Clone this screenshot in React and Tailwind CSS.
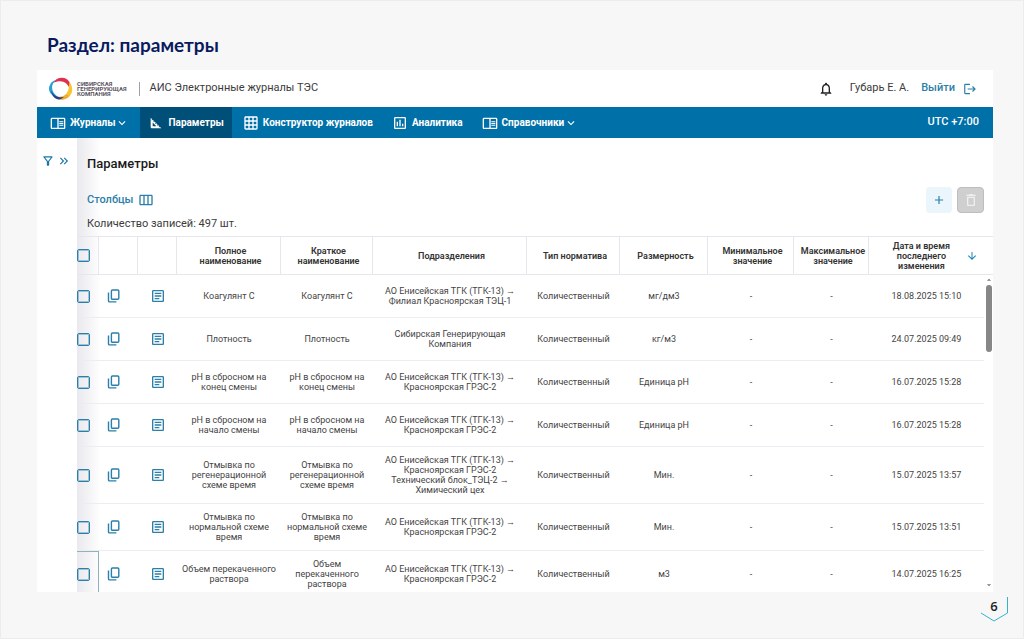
import React from 'react';
import {
  MdAdd,
  MdArrowDownward,
  MdArrowDropDown,
  MdArrowDropUp,
  MdExpandMore,
  MdGridOn,
  MdKeyboardDoubleArrowRight,
  MdLogout,
  MdNotificationsNone,
  MdOutlineArticle,
  MdOutlineAssessment,
  MdOutlineChromeReaderMode,
  MdOutlineDelete,
  MdOutlineFilterAlt,
  MdOutlineViewWeek,
  MdSquareFoot,
} from 'react-icons/md';

const NAV_ITEMS = [
  { label: 'Журналы', icon: MdOutlineChromeReaderMode, menu: true },
  { label: 'Параметры', icon: MdSquareFoot, active: true },
  { label: 'Конструктор журналов', icon: MdGridOn },
  { label: 'Аналитика', icon: MdOutlineAssessment },
  { label: 'Справочники', icon: MdOutlineChromeReaderMode, menu: true },
];

const COLUMNS = [
  { title: ['Полное', 'наименование'], width: 'w-[104px]' },
  { title: ['Краткое', 'наименование'], width: 'w-[92px]' },
  { title: ['Подразделения'], width: '' },
  { title: ['Тип норматива'], width: 'w-[93px]' },
  { title: ['Размерность'], width: 'w-[88px]' },
  { title: ['Минимальное', 'значение'], width: 'w-[86px]' },
  { title: ['Максимальное', 'значение'], width: 'w-[75px]' },
];

const ROWS = [
  {
    name: ['Коагулянт С'],
    short: ['Коагулянт С'],
    units: ['АО Енисейская ТГК (ТГК-13) →', 'Филиал Красноярская ТЭЦ-1'],
    measure: 'мг/дм3',
    date: '18.08.2025 15:10',
  },
  {
    name: ['Плотность'],
    short: ['Плотность'],
    units: ['Сибирская Генерирующая', 'Компания'],
    measure: 'кг/м3',
    date: '24.07.2025 09:49',
  },
  {
    name: ['pH в сбросном на', 'конец смены'],
    short: ['pH в сбросном на', 'конец смены'],
    units: ['АО Енисейская ТГК (ТГК-13) →', 'Красноярская ГРЭС-2'],
    measure: 'Единица pH',
    date: '16.07.2025 15:28',
  },
  {
    name: ['pH в сбросном на', 'начало смены'],
    short: ['pH в сбросном на', 'начало смены'],
    units: ['АО Енисейская ТГК (ТГК-13) →', 'Красноярская ГРЭС-2'],
    measure: 'Единица pH',
    date: '16.07.2025 15:28',
  },
  {
    name: ['Отмывка по', 'регенерационной', 'схеме время'],
    short: ['Отмывка по', 'регенерационной', 'схеме время'],
    units: ['АО Енисейская ТГК (ТГК-13) →', 'Красноярская ГРЭС-2', 'Технический блок_ТЭЦ-2 →', 'Химический цех'],
    measure: 'Мин.',
    date: '15.07.2025 13:57',
  },
  {
    name: ['Отмывка по', 'нормальной схеме', 'время'],
    short: ['Отмывка по', 'нормальной схеме', 'время'],
    units: ['АО Енисейская ТГК (ТГК-13) →', 'Красноярская ГРЭС-2'],
    measure: 'Мин.',
    date: '15.07.2025 13:51',
  },
  {
    name: ['Объем перекаченного', 'раствора'],
    short: ['Объем', 'перекаченного', 'раствора'],
    units: ['АО Енисейская ТГК (ТГК-13) →', 'Красноярская ГРЭС-2'],
    measure: 'м3',
    date: '14.07.2025 16:25',
    focused: true,
  },
];

const Logo = () => (
  <svg className="w-6 h-6" viewBox="0 0 24 24" aria-hidden="true">
    <path d="M4 6C8-1 18-1 21 6c1 3 1 5 0 7C19 5 12 2 4 6z" fill="#e0304f" />
    <path d="M20 5c6 6 3 15-4 17-2 1-5 1-7 0 8-2 12-9 11-17z" fill="#f6c62f" />
    <path d="M20 19c-5 6-13 4-17-2 5 4 11 3 15 0l2 2z" fill="#f2a93b" />
    <path d="M7 3C1 8 2 15 9 20 2 20-2 13 1 8c1-3 3-4 6-5z" fill="#2a9fd0" />
    <path d="M2 13c2 6 7 8 13 7-5 5-12 2-13-7z" fill="#25408f" />
  </svg>
);

const CopyIcon = () => (
  <svg className="w-[14px] h-[14px]" viewBox="0 0 14 14" fill="none" stroke="currentColor" strokeWidth="1.400" aria-hidden="true">
    <rect x="4.400" y="1" width="7.400" height="9.200" rx="1" />
    <path d="M1.500 3.600v8.300a1 1 0 0 0 1 1h6.900" />
  </svg>
);

const Checkbox = ({ label }) => (
  <input
    type="checkbox"
    aria-label={label}
    className="block w-[13px] h-[13px] appearance-none rounded-xs border border-[#2b7fa8] outline outline-[#2b7fa8]/40 -outline-offset-2 checked:bg-[#2b7fa8]"
  />
);

const Lines = ({ items }) => items.map((line) => (
  <span key={line} className="block whitespace-nowrap">{line}</span>
));

const Header = () => (
  <header className="h-[37px] shrink-0 flex items-center pl-3 pr-4 bg-white">
    <Logo />
    <div className="ml-1 text-[6px] leading-[5px] font-bold text-[#5a5360]">
      <Lines items={['СИБИРСКАЯ', 'ГЕНЕРИРУЮЩАЯ', 'КОМПАНИЯ']} />
    </div>
    <div className="ml-3 mr-[10px] h-[14px] border-l border-gray-400" />
    <span className="text-[11px] text-[#3c3c3c]">АИС Электронные журналы ТЭС</span>
    <button className="ml-auto text-[#222]" aria-label="Уведомления">
      <MdNotificationsNone className="w-4 h-4" />
    </button>
    <span className="ml-4 text-[11px] text-[#3c3c3c]">Губарь Е. А.</span>
    <a href="#logout" className="ml-3 flex items-center gap-2 text-[11px] font-medium text-[#2b7fa8]">
      Выйти
      <MdLogout className="w-[14px] h-[14px]" />
    </a>
  </header>
);

const Navigation = () => (
  <nav className="h-[31px] shrink-0 flex items-stretch gap-[3px] pl-[5px] pr-[14px] bg-[#0070a8] text-white text-[10px] font-bold">
    {NAV_ITEMS.map(({ label, icon: Icon, menu, active }) => (
      <a
        key={label}
        href="#section"
        className={`flex items-center gap-1 px-2 whitespace-nowrap ${active ? 'bg-[#004f78]' : ''}`}
      >
        <Icon className="w-4 h-4" />
        <span className="flex items-center">
          {label}
          {menu && <MdExpandMore className="w-[14px] h-[14px]" />}
        </span>
      </a>
    ))}
    <span className="ml-auto self-center text-[11px] font-medium">UTC +7:00</span>
  </nav>
);

const ParametersTable = () => (
  <table className="w-full table-fixed border-separate border-spacing-0 text-[9px] leading-[10px] text-center text-[#444]">
    <thead>
      <tr className="h-[39px] text-[#333]">
        <th className="w-[22px] p-0 border-y border-r border-[#e6e6ec]">
          <Checkbox label="Выбрать все" />
        </th>
        <th className="w-[39px] border-y border-r border-[#e6e6ec]" />
        <th className="w-[39px] border-y border-r border-[#e6e6ec]" />
        {COLUMNS.map(({ title, width }) => (
          <th key={title[0]} className={`${width} py-0 pl-1 pr-0 font-semibold border-y border-r border-[#e6e6ec]`}>
            <Lines items={title} />
          </th>
        ))}
        <th className="w-[115px] p-0 font-semibold border-y border-[#e6e6ec]">
          <div className="flex items-center justify-end gap-4">
            <span>
              <Lines items={['Дата и время', 'последнего', 'изменения']} />
            </span>
            <button className="mr-[6px] text-[#1583bd]" aria-label="Сортировка">
              <MdArrowDownward className="w-3 h-3" />
            </button>
          </div>
        </th>
        <th className="w-[9px] p-0 border-y border-[#e6e6ec]" />
      </tr>
    </thead>
    <tbody className="[&_td]:border-b [&_td]:border-[#ececf2] [&_td]:px-0 [&_td]:py-2">
      {ROWS.map((row) => (
        <tr key={row.name.join() + row.date} className="h-[43px]">
          <td className={row.focused ? 'border-r border-t border-t-[#8fb3bd]! border-r-[#8fb3bd]!' : ''}>
            <Checkbox label={row.name.join(' ')} />
          </td>
          <td>
            <button className="block ml-2 text-[#2b7fa8]" aria-label="Копировать">
              <CopyIcon />
            </button>
          </td>
          <td>
            <button className="block mx-auto text-[#2b7fa8]" aria-label="Подробнее">
              <MdOutlineArticle className="w-4 h-4" />
            </button>
          </td>
          <td><Lines items={row.name} /></td>
          <td><Lines items={row.short} /></td>
          <td><Lines items={row.units} /></td>
          <td>Количественный</td>
          <td>{row.measure}</td>
          <td>-</td>
          <td>-</td>
          <td>{row.date}</td>
        </tr>
      ))}
    </tbody>
  </table>
);

export default function App() {
  return (
    <div className="h-screen flex flex-col bg-[#f7f7f7] border border-[#ececec] pl-9 pr-[30px] font-['Roboto',sans-serif]">
      <h1 className="h-[69px] shrink-0 pt-8 pl-[10px] text-[19px] leading-6 font-bold text-[#0a1a5e] font-['Lato',sans-serif]">
        Раздел: параметры
      </h1>

      <div className="flex-1 min-h-0 flex flex-col bg-white overflow-hidden">
        <Header />
        <Navigation />

        <div className="flex-1 min-h-0 flex">
          {/* Collapsed filter panel */}
          <aside className="w-10 shrink-0 flex items-start gap-[2px] pt-4 pl-1 text-[#1976a8]">
            <button aria-label="Фильтр"><MdOutlineFilterAlt className="w-[14px] h-[14px]" /></button>
            <button aria-label="Развернуть"><MdKeyboardDoubleArrowRight className="w-[14px] h-[14px]" /></button>
          </aside>

          <main className="relative flex-1 min-w-0 overflow-hidden bg-linear-to-r from-[#e9e9ee] to-white to-[24px]">
            <div className="h-[98px] pl-[10px] pr-[9px]">
              <h2 className="pt-4 text-[13px] leading-5 font-medium text-[#1a1a1a]">Параметры</h2>
              <div className="mt-[13px] h-[26px] flex items-center gap-[5px]">
                <button className="flex items-center gap-[5px] text-[11px] font-medium text-[#2b7fa8]">
                  Столбцы
                  <MdOutlineViewWeek className="w-4 h-4" />
                </button>
                <button className="ml-auto w-[26px] h-[26px] flex items-center justify-center rounded bg-[#eaf6fc] text-[#2b7fa8]" aria-label="Добавить">
                  <MdAdd className="w-[14px] h-[14px]" />
                </button>
                <button className="w-[27px] h-[26px] flex items-center justify-center rounded bg-[#cfcfcf] border border-[#bdbdbd] text-[#efefef]" aria-label="Удалить">
                  <MdOutlineDelete className="w-4 h-4" />
                </button>
              </div>
              <p className="mt-[3px] text-[11px] leading-4 text-[#3c3c3c]">Количество записей: 497 шт.</p>
            </div>

            <ParametersTable />

            {/* Scrollbar over the table's right edge */}
            <div className="absolute top-[137px] bottom-0 right-0 w-[9px] flex flex-col items-center justify-between bg-white text-[#777]">
              <div className="flex flex-col items-center">
                <MdArrowDropUp className="w-[10px] h-[10px]" />
                <div className="w-[6px] h-[67px] rounded-full bg-[#868686]" />
              </div>
              <MdArrowDropDown className="mb-[2px] w-[10px] h-[10px]" />
            </div>
          </main>
        </div>
      </div>

      <footer className="h-[46px] shrink-0 flex justify-end -mr-[15px]">
        <div className="relative w-[28px] h-[30px] text-center">
          <svg className="absolute inset-0 w-full h-full" viewBox="0 0 28 30" fill="none" stroke="#35b3c9" aria-hidden="true">
            <path d="M27.500 5v16L14 29 1 21" />
          </svg>
          <span className="relative text-[13px] leading-[28px] font-semibold text-[#222] font-['Open_Sans',sans-serif]">6</span>
        </div>
      </footer>
    </div>
  );
}
